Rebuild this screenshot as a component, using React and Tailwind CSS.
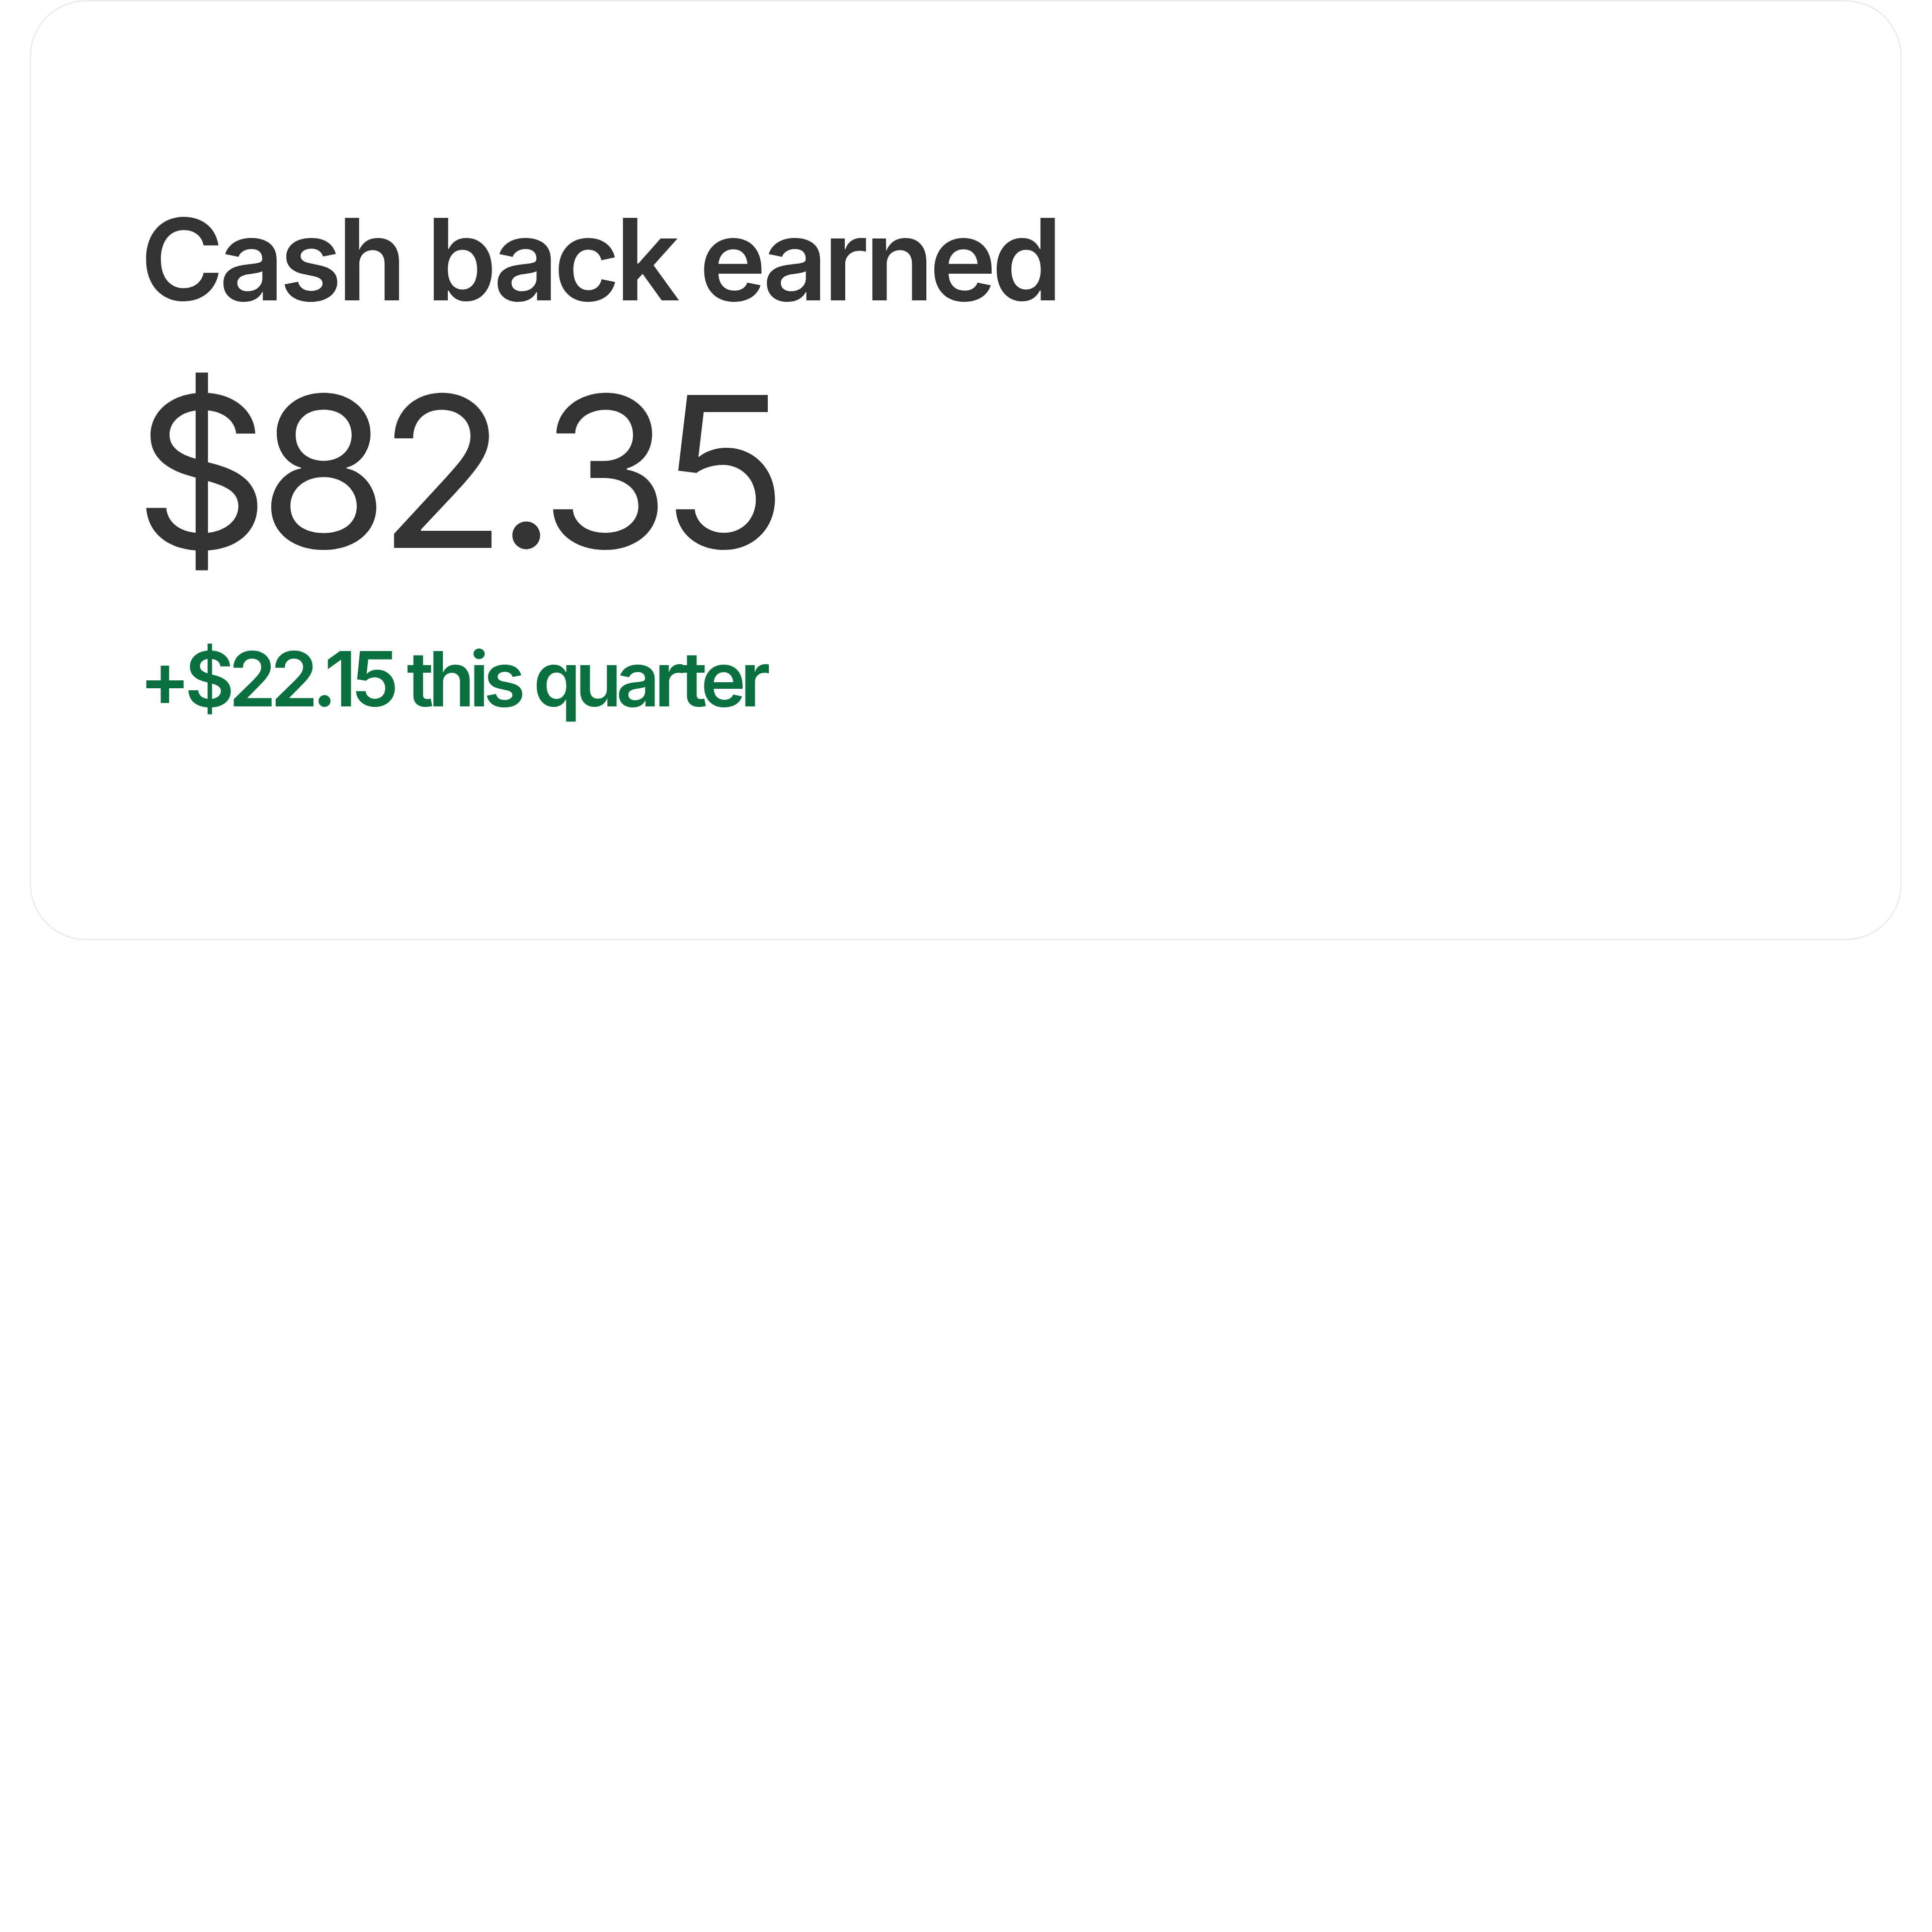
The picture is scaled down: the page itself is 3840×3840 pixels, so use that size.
export default function App() {
  return (
    <div className="w-[3840px] h-[3840px] bg-white" style={{ fontFamily: 'Inter, "Noto Sans", sans-serif' }}>
      <div className="ml-[59px] w-[3721px] h-[1869px] rounded-[112px] border-[3px] border-[#ededed] bg-white pl-[217px] pt-[400px] flex flex-col">
        <h2 className="text-[225px] leading-[225px] font-semibold text-[#333333] tracking-[-9px]">
          Cash back earned
        </h2>
        <div className="mt-[100px] -ml-[12px] text-[418px] leading-[418px] font-normal text-[#333333] tracking-[-21px]">
          $82.35
        </div>
        <div className="mt-[128px] -ml-[2px] text-[151px] leading-[151px] font-semibold text-[#0b7040] tracking-[-11px]">
          +$22.15 this quarter
        </div>
      </div>
    </div>
  );
}
